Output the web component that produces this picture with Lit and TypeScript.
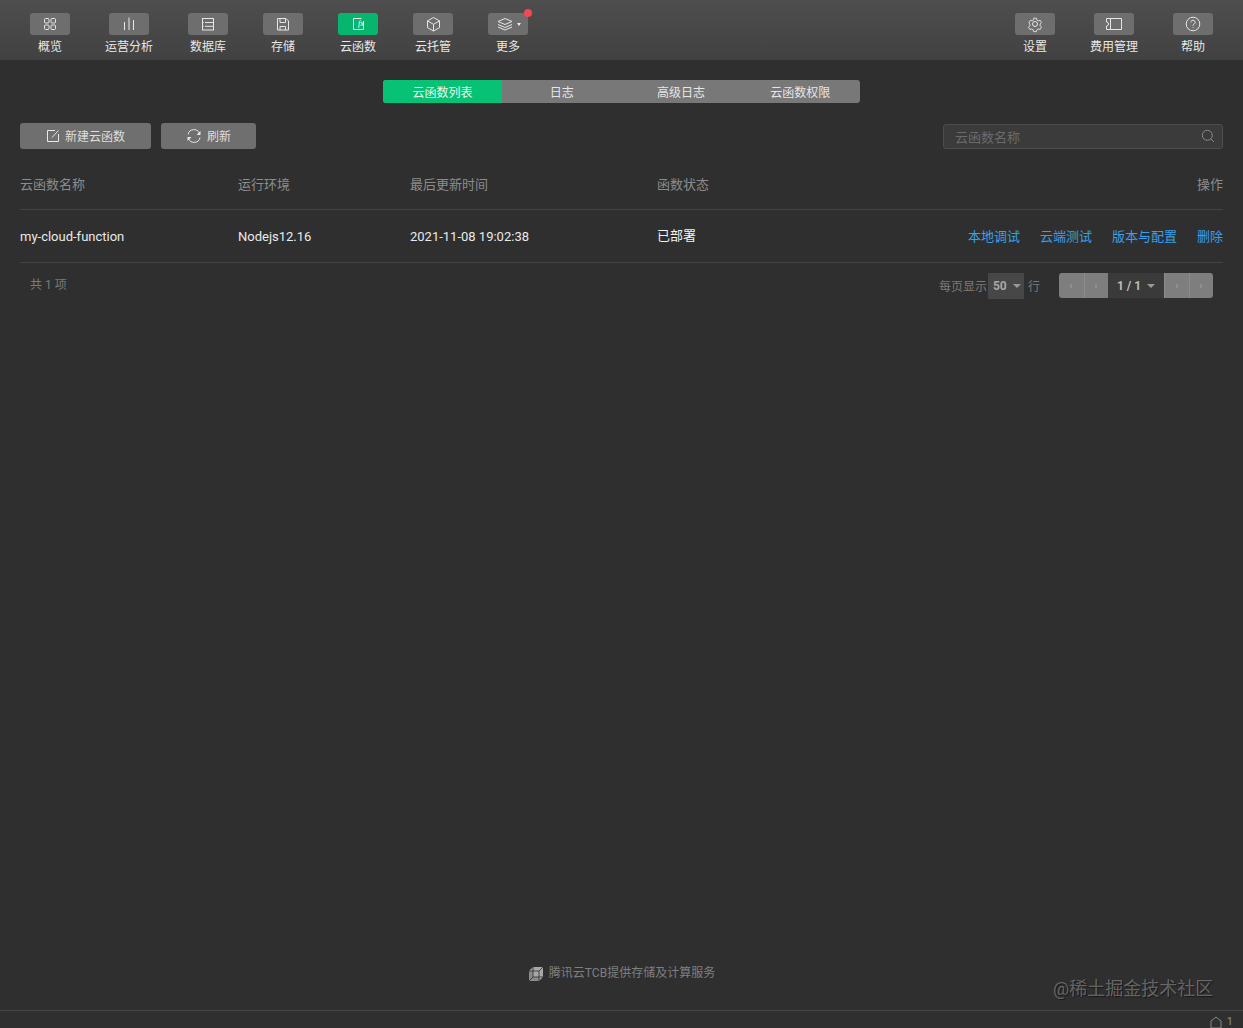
import { LitElement, html, css, svg } from 'lit';
import { customElement } from 'lit/decorators.js';

const icons: Record<string, unknown> = {
  overview: svg`<rect x="3.500" y="3.500" width="4.500" height="4.500" rx="1"/><rect x="10" y="3.500" width="4.500" height="4.500" rx="1"/><rect x="3.500" y="10" width="4.500" height="4.500" rx="1"/><rect x="10" y="10" width="4.500" height="4.500" rx="1"/>`,
  chart: svg`<path d="M4.500 15V7M9 15V2.500M13.500 15V5"/>`,
  db: svg`<rect x="3.500" y="3.500" width="11" height="11.500"/><path d="M6 7.500h8.500M6 11.300h8.500M3.500 7.500h1.200M3.500 11.300h1.200"/>`,
  save: svg`<path d="M3.500 3.500h8.500l2.500 2.500v9h-11z"/><path d="M6 3.500v4h5.500v-4M6 15v-3.500h5.500V15"/>`,
  fx: svg`<path d="M12.500 3.500H4.500v11h10V6"/>`,
  box: svg`<path d="M9.500 2.500l6 3.400v6.700l-6 3.400-6-3.400V5.900z"/><path d="M3.500 5.900l6 3.400 6-3.400M9.500 9.300V16"/>`,
  layers: svg`<path d="M9 3.500l7 3-7 3-7-3z"/><path d="M2 9.500l7 3 7-3M2 12l7 3 7-3"/>`,
  gear: svg`<circle cx="9" cy="9" r="2.500"/><path d="M7.500 2.500h3l.5 2 1.700 1 2-.6 1.500 2.600-1.500 1.500v2l1.500 1.500-1.500 2.600-2-.6-1.700 1-.5 2h-3l-.5-2-1.700-1-2 .6-1.500-2.600 1.500-1.500v-2L2.300 7.500l1.500-2.600 2 .6 1.700-1z" transform="translate(0.900 0.900) scale(.9)"/>`,
  ticket: svg`<path d="M1.500 3.500h15v11h-15v-3.500a2 2 0 0 0 0-4zM5.500 3.500v11"/>`,
  help: svg`<circle cx="9" cy="9" r="6.800"/><path d="M6.900 7.300a2.100 2.100 0 1 1 3.200 1.800c-.7.400-1.100.9-1.100 1.700"/><path d="M9 12.300v.8"/>`,
};

const leftNav = [
  { label: '概览', icon: 'overview' },
  { label: '运营分析', icon: 'chart' },
  { label: '数据库', icon: 'db' },
  { label: '存储', icon: 'save' },
  { label: '云函数', icon: 'fx', active: true },
  { label: '云托管', icon: 'box' },
  { label: '更多', icon: 'layers', more: true },
];
const rightNav = [
  { label: '设置', icon: 'gear' },
  { label: '费用管理', icon: 'ticket' },
  { label: '帮助', icon: 'help' },
];

@customElement('app-root')
export class AppRoot extends LitElement {
  private _navItem(item: { label: string; icon: string; active?: boolean; more?: boolean }) {
    return html`
      <div class="nav-item ${item.active ? 'is-active' : ''}">
        <div class="nav-item__box">
          <svg class="nav-item__icon" viewBox="0 0 18 18">${icons[item.icon]}</svg>
          ${item.icon === 'fx' ? html`<span class="nav-item__fx">fx</span>` : ''}
          ${item.more ? html`<span class="caret caret--white"></span><span class="nav-item__dot"></span>` : ''}
        </div>
        <span>${item.label}</span>
      </div>
    `;
  }

  render() {
    return html`
      <header class="toolbar">
        <nav class="toolbar__group">${leftNav.map((i) => this._navItem(i))}</nav>
        <nav class="toolbar__group">${rightNav.map((i) => this._navItem(i))}</nav>
      </header>

      <main class="content">
        <div class="tabs">
          <div class="tabs__tab is-active">云函数列表</div>
          <div class="tabs__tab">日志</div>
          <div class="tabs__tab">高级日志</div>
          <div class="tabs__tab">云函数权限</div>
        </div>

        <div class="actions">
          <button class="btn btn--new">
            <svg class="btn__icon" viewBox="0 0 14 14"><path d="M9 1.500H1.500v11h11V5"/><path d="M6 8.500l6.500-7"/></svg>
            <span class="btn__label">新建云函数</span>
          </button>
          <button class="btn btn--refresh">
            <svg class="btn__icon btn__icon--refresh" viewBox="0 0 16 16">
              <path d="M2 6.500A6 6 0 0 1 13.500 5.500M14 9.500A6 6 0 0 1 2.500 10.500"/>
              <path class="solid" d="M14.500 3v4h-4zM1.500 13V9h4z"/>
            </svg>
            <span class="btn__label">刷新</span>
          </button>
          <div class="search">
            <span>云函数名称</span>
            <svg class="search__icon" viewBox="0 0 14 14"><circle cx="6.300" cy="6.300" r="5"/><path d="M10 10l3 3"/></svg>
          </div>
        </div>

        <div class="table">
          <div class="row row--head">
            <div>云函数名称</div>
            <div>运行环境</div>
            <div>最后更新时间</div>
            <div>函数状态</div>
            <div class="row__ops">操作</div>
          </div>
          <div class="row row--body">
            <div>my-cloud-function</div>
            <div>Nodejs12.16</div>
            <div>2021-11-08 19:02:38</div>
            <div class="row__status">已部署</div>
            <div class="row__ops row__links">
              <a>本地调试</a><a>云端测试</a><a>版本与配置</a><a>删除</a>
            </div>
          </div>
        </div>

        <div class="pager">
          <span class="pager__total">共 1 项</span>
          <span class="pager__size">
            每页显示<span class="pager__select"><b>50</b><span class="caret"></span></span>行
          </span>
          <div class="pager__nav">
            <span class="pager__btn"><i></i></span>
            <span class="pager__btn"><i></i></span>
            <span class="pager__page"><b>1 / 1</b><span class="caret"></span></span>
            <span class="pager__btn"><i></i></span>
            <span class="pager__btn"><i></i></span>
          </div>
        </div>
      </main>

      <div class="provider">
        <svg class="provider__logo" viewBox="0 0 16 16">
          <path class="provider__cube" d="M5 1h10v10l-4 4H1V5z"/>
          <path class="provider__shade" d="M1 15V5h4v6zM1 15l4-4h6v4z"/>
          <path class="provider__lines" d="M1 5h10v10M5 1v10h10M1 15l4-4M11 5l4-4"/>
        </svg>
        腾讯云TCB提供存储及计算服务
      </div>

      <footer class="status">
        <svg class="status__icon" viewBox="0 0 12 12"><path d="M6 1l5 4v7H1V5z"/></svg>
        <span>1</span>
      </footer>

      <div class="watermark">@稀土掘金技术社区</div>
    `;
  }

  static styles = css`
    :host {
      display: flex;
      flex-direction: column;
      position: relative;
      height: 1028px;
      overflow: hidden;
      background: #2f2f2f;
      color: #e0e0e0;
      font-family: Roboto, 'Noto Sans CJK SC', sans-serif;
      font-size: 12px;
    }

    .toolbar {
      display: flex;
      justify-content: space-between;
      height: 60px;
      padding: 13px 30px 0;
      box-sizing: border-box;
      background: linear-gradient(#4e4e4e, #414141);
    }
    .toolbar__group {
      display: flex;
      gap: 35px;
    }
    .nav-item {
      display: flex;
      flex-direction: column;
      align-items: center;
      gap: 4px;
      min-width: 40px;
      line-height: 17px;
      color: #e8e8e8;
      font-size: 12px;
    }
    .nav-item__box {
      position: relative;
      display: flex;
      align-items: center;
      justify-content: center;
      gap: 3px;
      width: 40px;
      height: 22px;
      border-radius: 3px;
      background: #6e6e6e;
    }
    .nav-item.is-active .nav-item__box {
      background: #07b56f;
    }
    .nav-item__icon {
      width: 18px;
      height: 18px;
      fill: none;
      stroke: #e6e6e6;
      stroke-width: 1;
    }
    .nav-item__fx {
      position: absolute;
      left: 20px;
      top: 5px;
      font: italic 8px/12px 'Liberation Serif', serif;
      color: #fff;
    }
    .nav-item__dot {
      position: absolute;
      top: -4px;
      right: -4px;
      width: 8px;
      height: 8px;
      border-radius: 50%;
      background: #f5474f;
    }
    .caret {
      display: inline-block;
      width: 0;
      height: 0;
      border-left: 4px solid transparent;
      border-right: 4px solid transparent;
      border-top: 4px solid #999;
    }
    .caret--white {
      border-left-width: 2.5px;
      border-right-width: 2.5px;
      border-top: 3px solid #eee;
    }

    .content {
      display: flex;
      flex-direction: column;
      padding: 20px 20px 0;
    }
    .tabs {
      display: flex;
      align-self: center;
      width: 477px;
      height: 23px;
      border-radius: 3px;
      overflow: hidden;
      background: #787878;
    }
    .tabs__tab {
      flex: 1;
      text-align: center;
      line-height: 26px;
      color: #e6e6e6;
    }
    .tabs__tab.is-active {
      background: #07c175;
      color: #e9f8f1;
    }

    .actions {
      display: flex;
      align-items: center;
      gap: 10px;
      height: 26px;
      margin-top: 20px;
    }
    .btn {
      display: flex;
      align-items: center;
      justify-content: center;
      gap: 5px;
      height: 26px;
      padding: 0;
      border: 0;
      border-radius: 3px;
      background: #6f6f6f;
      color: #dedede;
      font: inherit;
    }
    .btn--new {
      width: 131px;
    }
    .btn--refresh {
      width: 95px;
    }
    .btn__label {
      margin-bottom: 2px;
    }
    .btn__icon {
      width: 14px;
      height: 14px;
      fill: none;
      stroke: #e8e8e8;
      stroke-width: 1;
    }
    .btn__icon--refresh {
      width: 16px;
      height: 16px;
    }
    .btn__icon .solid {
      fill: #e8e8e8;
      stroke: none;
    }
    .search {
      display: flex;
      align-items: center;
      justify-content: space-between;
      box-sizing: border-box;
      width: 280px;
      height: 25px;
      margin-left: auto;
      padding: 0 7px 0 11px;
      border: 1px solid #4d4d4d;
      border-radius: 3px;
      background: #3b3b3b;
      color: #6b6b6b;
      font-size: 13px;
    }
    .search__icon {
      width: 14px;
      height: 14px;
      fill: none;
      stroke: #8a8a8a;
      stroke-width: 1;
    }

    .table {
      display: flex;
      flex-direction: column;
      margin-top: 9px;
    }
    .row {
      display: grid;
      grid-template-columns: 218px 172px 247px 1fr 1fr;
      align-items: center;
      border-bottom: 1px solid #444;
      font-size: 13px;
    }
    .row--head {
      box-sizing: border-box;
      height: 52px;
      color: #8c8c8c;
    }
    .row--body {
      height: 53px;
      box-sizing: border-box;
      color: #eaeaea;
    }
    .row__status {
      padding-bottom: 3px;
      color: #f2f2f2;
    }
    .row__ops {
      justify-self: end;
    }
    .row__links {
      display: flex;
      gap: 20px;
      padding-bottom: 2px;
      color: #3a9fe6;
    }

    .pager {
      display: flex;
      align-items: center;
      height: 25px;
      margin-top: 10px;
      padding: 0 10px;
      color: #7a7a7a;
    }
    .pager__total {
      margin-right: auto;
      margin-bottom: 5px;
    }
    .pager__size {
      display: flex;
      align-items: center;
      gap: 0;
    }
    .pager__select {
      display: flex;
      align-items: center;
      justify-content: space-between;
      box-sizing: border-box;
      width: 36px;
      height: 26px;
      margin: 0 4px 0 1px;
      padding: 0 3px 0 5px;
      background: #474747;
      color: #a8a8a8;
    }
    .pager__nav {
      display: flex;
      height: 25px;
      margin-left: 19px;
      border-radius: 3px;
      overflow: hidden;
    }
    .pager__btn {
      display: flex;
      align-items: center;
      justify-content: center;
      box-sizing: border-box;
      width: 24.500px;
      background: #7e7e7e;
      border-left: 1px solid #8c8c8c;
    }
    .pager__btn:first-child {
      border-left: 0;
    }
    .pager__btn i {
      width: 2px;
      height: 4px;
      background: #8f8f8f;
    }
    .pager__page {
      display: flex;
      align-items: center;
      justify-content: center;
      gap: 6px;
      width: 56px;
      background: #3a3a3a;
      color: #bdbdbd;
    }

    .provider {
      display: flex;
      align-items: center;
      justify-content: center;
      gap: 5px;
      position: absolute;
      left: 0;
      right: 0;
      bottom: 46px;
      color: #7f7f7f;
      line-height: 17px;
    }
    .provider__logo {
      width: 16px;
      height: 16px;
    }
    .provider__cube {
      fill: #a8a8a8;
    }
    .provider__shade {
      fill: #8a8a8a;
    }
    .provider__lines {
      fill: none;
      stroke: #2f2f2f;
      stroke-width: 0.8;
    }

    .status {
      display: flex;
      align-items: center;
      justify-content: flex-end;
      gap: 5px;
      box-sizing: border-box;
      height: 18px;
      margin-top: auto;
      padding: 4px 10px 0 0;
      border-top: 1px solid #444;
      color: #8a8a8a;
      font-size: 11px;
    }
    .status__icon {
      width: 12px;
      height: 12px;
      fill: none;
      stroke: #8a8a8a;
    }

    .watermark {
      position: absolute;
      top: 976px;
      left: 1053px;
      font-size: 18px;
      line-height: 25px;
      color: rgba(255, 255, 255, 0.3);
      text-shadow: 1px 1px 1px rgba(0, 0, 0, 0.5);
      white-space: nowrap;
    }
  `;
}

declare global {
  interface HTMLElementTagNameMap {
    'app-root': AppRoot;
  }
}
